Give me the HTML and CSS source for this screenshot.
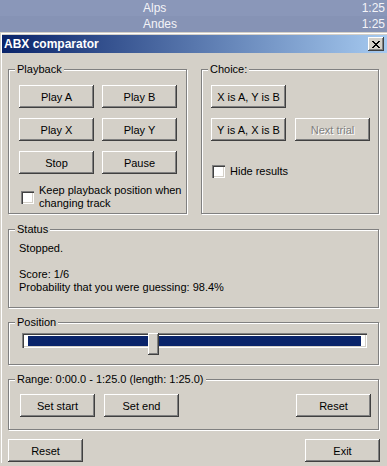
FILE: index.html
```html
<!DOCTYPE html>
<html lang="en">
<head>
    <meta charset="UTF-8">
    <title>ABX comparator</title>
    <link rel="stylesheet" href="styles.css">
</head>
<body>

<!-- playlist behind the dialog -->
<div class="tracks">
    <div class="track"><span class="name">Alps</span><span class="len">1:25</span></div>
    <div class="track alt"><span class="name">Andes</span><span class="len">1:25</span></div>
</div>

<div class="window">
    <div class="titlebar">
        <span class="title">ABX comparator</span>
        <button class="close" title="Close">
            <svg width="8" height="7" viewBox="0 0 8 7" shape-rendering="crispEdges">
                <path fill="#000" d="M0 0h2v1H0zM6 0h2v1H6zM1 1h2v1H1zM5 1h2v1H5zM2 2h4v1H2zM3 3h2v1H3zM2 4h4v1H2zM1 5h2v1H1zM5 5h2v1H5zM0 6h2v1H0zM6 6h2v1H6z"/>
            </svg>
        </button>
    </div>

    <div class="client">
        <div class="top-row">
            <div class="group playback">
                <div class="legend">Playback</div>
                <div class="btn-grid">
                    <button class="btn">Play A</button>
                    <button class="btn">Play B</button>
                    <button class="btn">Play X</button>
                    <button class="btn">Play Y</button>
                    <button class="btn">Stop</button>
                    <button class="btn">Pause</button>
                </div>
                <label class="check keep">
                    <span class="box"></span>
                    <span>Keep playback position when<br>changing track</span>
                </label>
            </div>

            <div class="group choice">
                <div class="legend">Choice:</div>
                <div class="btn-grid">
                    <button class="btn">X is A, Y is B</button>
                    <span></span>
                    <button class="btn">Y is A, X is B</button>
                    <button class="btn" disabled>Next trial</button>
                </div>
                <label class="check hide">
                    <span class="box"></span>
                    <span>Hide results</span>
                </label>
            </div>
        </div>

        <div class="group status">
            <div class="legend">Status</div>
            <div class="status-text">
                <div>Stopped.</div>
                <div>&nbsp;</div>
                <div>Score: 1/6</div>
                <div>Probability that you were guessing: 98.4%</div>
            </div>
        </div>

        <div class="group position">
            <div class="legend">Position</div>
            <div class="slider">
                <div class="slider-track"><div class="slider-fill"></div></div>
                <div class="thumb" style="left: 126px"></div>
            </div>
        </div>

        <div class="group range">
            <div class="legend">Range: 0:00.0 - 1:25.0 (length: 1:25.0)</div>
            <div class="range-buttons">
                <button class="btn">Set start</button>
                <button class="btn">Set end</button>
                <button class="btn push-right">Reset</button>
            </div>
        </div>

        <div class="footer">
            <button class="btn">Reset</button>
            <button class="btn">Exit</button>
        </div>
    </div>
</div>

</body>
</html>
```

FILE: styles.css
```css
body {
    margin: 0;
    padding: 0;
    width: 387px;
    height: 466px;
    overflow: hidden;
    background-color: #d4d0c8;
    font-family: "Liberation Sans", Arial, sans-serif;
    font-size: 11px;
    line-height: 13px;
    color: #000;
}
.tracks {
    height: 32px;
    background-color: #8895b7;
    color: #f4f4f8;
}
.track {
    display: flex;
    height: 16px;
    line-height: 17px;
    padding: 0 2px 0 143px;
    font-size: 12px;
    background-color: #8a97b9;
}
.track.alt {
    background-color: #8693b5;
}
.track .len {
    margin-left: auto;
}
.window {
    background-color: #d4d0c8;
    border-top: 1px solid #d4d0c8;
    border-left: 1px solid #d4d0c8;
    box-shadow: inset 1px 1px 0 #fff;
    padding: 2px 0 0 1px;
    height: 431px;
    box-sizing: border-box;
}
.titlebar {
    display: flex;
    align-items: center;
    height: 18px;
    padding: 0 3px 0 2px;
    background: linear-gradient(to right, #0a246a, #a6caf0);
}
.title {
    color: #fff;
    font-weight: bold;
    font-size: 12px;
}
.close {
    margin-left: auto;
    width: 16px;
    height: 14px;
    padding: 0;
    border: none;
    background-color: #d4d0c8;
    display: flex;
    align-items: center;
    justify-content: center;
    box-shadow: inset -1px -1px #404040, inset 1px 1px #fff, inset -2px -2px #808080;
}
.client {
    padding: 16px 8px 0 6px;
}
/* etched group box */
.group {
    border: 1px solid #808080;
    box-shadow: inset 1px 1px 0 #fff, 1px 1px 0 #fff;
    box-sizing: border-box;
}
.legend {
    display: table;
    margin: -7px 0 0 -4px;
    padding: 0 2px;
    background-color: #d4d0c8;
}
.top-row {
    display: flex;
    gap: 14px;
}
.playback {
    width: 179px;
    padding: 0 0 3px 10px;
}
.choice {
    width: 178px;
    padding: 0 0 0 9px;
}
.choice .legend {
    margin-left: -3px;
}
.btn-grid {
    display: grid;
    grid-template-columns: 75px 75px;
    column-gap: 8px;
    row-gap: 10px;
    margin-top: 9px;
}
.choice .btn-grid {
    column-gap: 9px;
}
.btn {
    width: 75px;
    height: 23px;
    padding: 0;
    border: none;
    background-color: #d4d0c8;
    font-family: inherit;
    font-size: 11px;
    color: #000;
    box-shadow: inset -1px -1px #404040, inset 1px 1px #fff, inset -2px -2px #808080;
}
.btn:disabled {
    color: #808080;
    text-shadow: 1px 1px 0 #fff;
}
.check {
    display: flex;
    align-items: center;
    gap: 5px;
}
.check.keep {
    margin: 10px 0 0 2px;
}
.check.hide {
    margin: 24px 0 0 1px;
}
.box {
    width: 13px;
    height: 13px;
    flex-shrink: 0;
    background-color: #fff;
    box-sizing: border-box;
    box-shadow: inset 1px 1px #808080, inset 2px 2px #404040, inset -1px -1px #fff, inset -2px -2px #d4d0c8;
}
.status {
    margin-top: 15px;
    height: 79px;
    padding-left: 10px;
}
.status-text {
    margin-top: 6px;
}
.position {
    margin-top: 14px;
    height: 43px;
    padding-left: 10px;
}
.slider {
    position: relative;
    height: 22px;
    margin: 3px 11px 0 3px;
}
.slider-track {
    margin-top: 4px;
    height: 15px;
    box-sizing: border-box;
    padding: 3px 6px 2px 6px;
    background-color: #fff;
    box-shadow: inset 1px 1px #808080, inset 2px 2px #404040, inset -1px -1px #fff, inset -2px -2px #d4d0c8;
}
.slider-fill {
    height: 100%;
    background-color: #0a246a;
}
.thumb {
    position: absolute;
    top: 0;
    width: 11px;
    height: 22px;
    background-color: #d4d0c8;
    box-shadow: inset -1px -1px #404040, inset 1px 1px #fff, inset -2px -2px #808080;
}
.range {
    margin-top: 14px;
    height: 51px;
    padding: 0 7px 0 11px;
}
.range .legend {
    margin-left: -5px;
}
.range-buttons {
    display: flex;
    gap: 9px;
    margin-top: 8px;
}
.push-right {
    margin-left: auto;
}
.footer {
    display: flex;
    justify-content: space-between;
    margin: 9px -1px 0 0;
}
```
